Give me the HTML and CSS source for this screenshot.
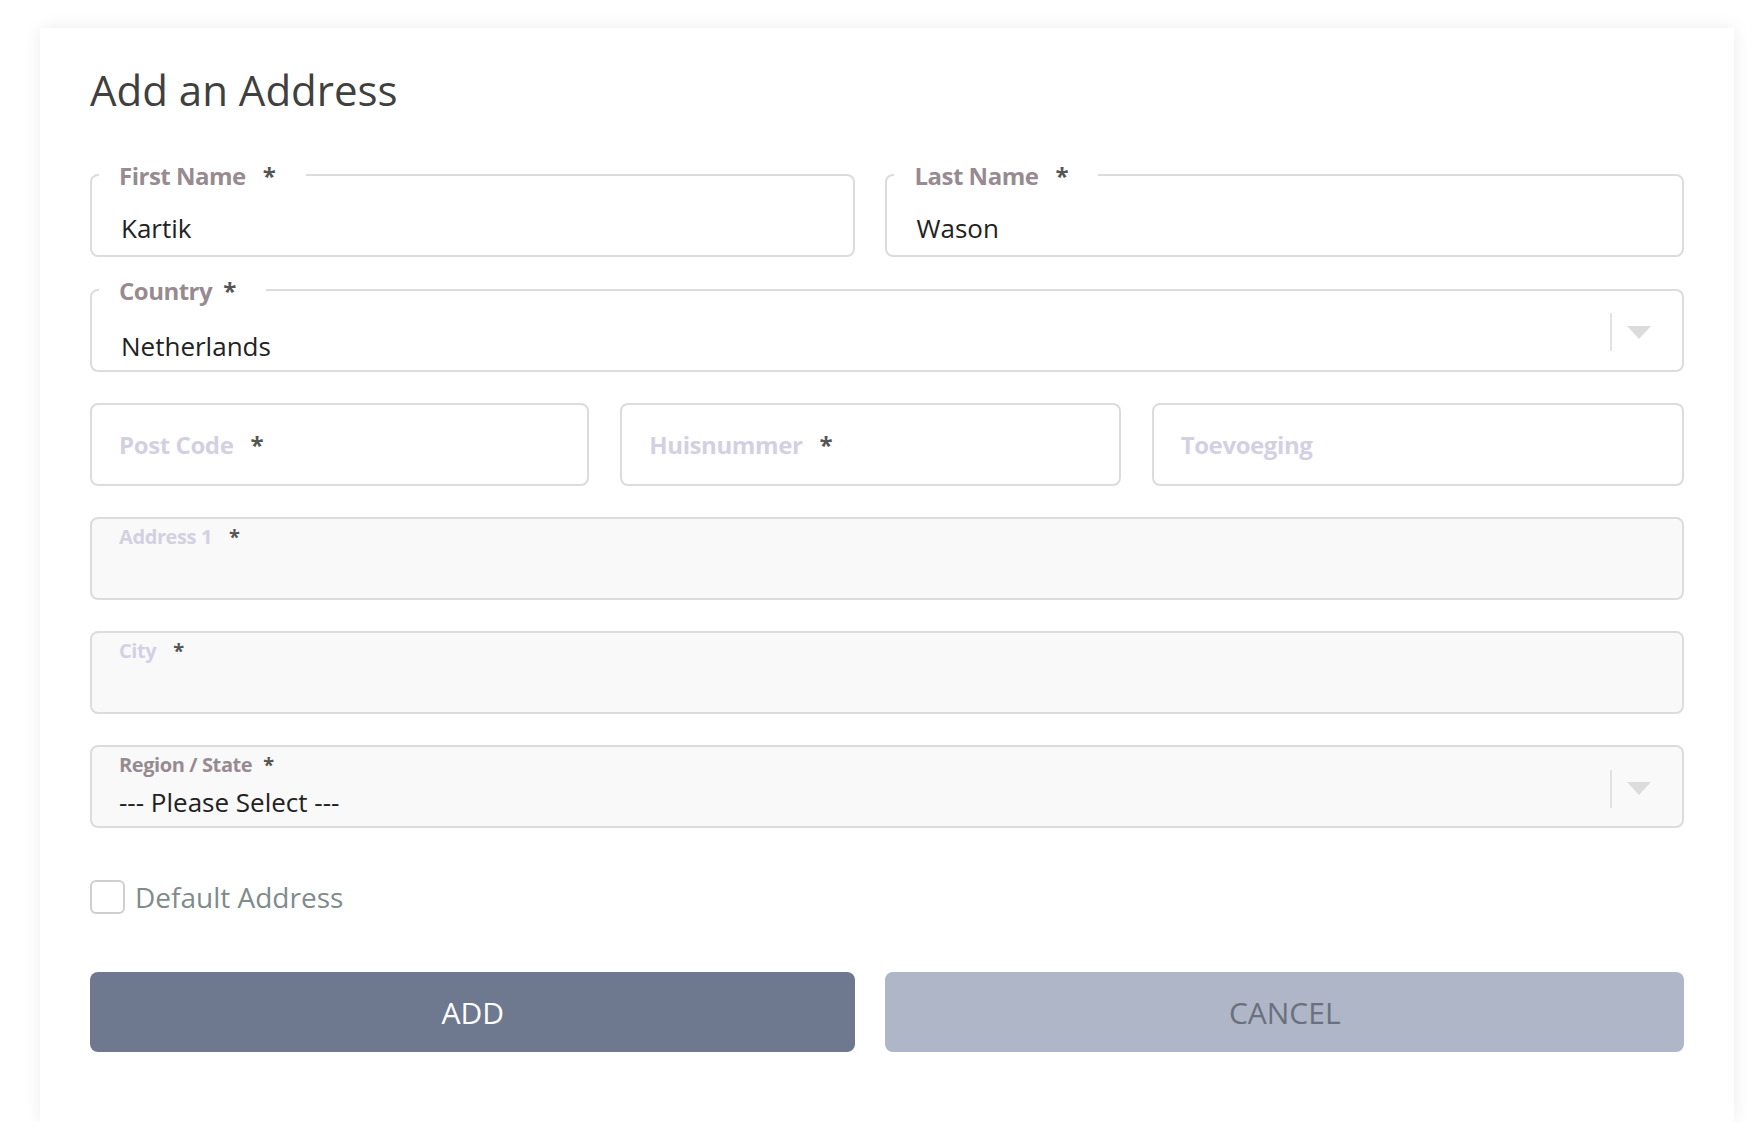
FILE: index.html
```html
<!DOCTYPE html>
<html lang="en">
<head>
<meta charset="utf-8">
<title>Add an Address</title>
<link rel="stylesheet" href="styles.css">
</head>
<body>
<div class="card">
  <h1 class="title">Add an Address</h1>
  <form class="form">
    <div class="row two first">
      <fieldset class="field">
        <legend class="legend">First Name<span class="req">*</span></legend>
        <div class="value">Kartik</div>
      </fieldset>
      <fieldset class="field">
        <legend class="legend">Last Name<span class="req">*</span></legend>
        <div class="value">Wason</div>
      </fieldset>
    </div>

    <fieldset class="field country">
      <legend class="legend">Country<span class="req tight">*</span></legend>
      <div class="select-row">
        <div class="value select-value">Netherlands</div>
        <span class="sep sep-country"></span>
        <span class="caret caret-country"></span>
      </div>
    </fieldset>

    <div class="row three gap-top">
      <div class="box plain"><span class="ph">Post Code</span><span class="req">*</span></div>
      <div class="box plain"><span class="ph">Huisnummer</span><span class="req">*</span></div>
      <div class="box plain"><span class="ph">Toevoeging</span></div>
    </div>

    <div class="box filled gap-top">
      <span class="small-label">Address 1<span class="req">*</span></span>
    </div>

    <div class="box filled gap-top">
      <span class="small-label">City<span class="req">*</span></span>
    </div>

    <div class="box filled region gap-top">
      <div class="stack">
        <span class="small-label mauve">Region / State<span class="req tight">*</span></span>
        <span class="region-value">--- Please Select ---</span>
      </div>
      <span class="sep sep-region"></span>
      <span class="caret caret-region"></span>
    </div>

    <label class="check"><span class="checkbox"></span>Default Address</label>

    <div class="row two buttons">
      <button type="button" class="btn add">ADD</button>
      <button type="button" class="btn cancel">CANCEL</button>
    </div>
  </form>
</div>
</body>
</html>
```

FILE: styles.css
```css
* { box-sizing: border-box; }

body {
  margin: 0;
  background: #ffffff;
  font-family: "Open Sans", "Noto Sans", sans-serif;
}

.card {
  margin: 28px 20px 0 40px;
  background: #ffffff;
  box-shadow: 0 0 16px rgba(0, 0, 0, 0.08);
  padding: 34px 50px 70px 50px;
}

.title {
  margin: 0;
  font-size: 42px;
  line-height: 56px;
  font-weight: 400;
  color: #404040;
}

.form { margin: 0; }

.row { display: grid; }
.row.two { grid-template-columns: 765fr 798fr; column-gap: 30px; }
.row.three { grid-template-columns: 499fr 500fr 532fr; column-gap: 31px; }
.first { margin-top: 41px; }
.gap-top { margin-top: 31px; }

.field {
  margin: 0;
  padding: 0;
  min-width: 0;
  border: 2px solid #dcdcdc;
  border-radius: 8px;
}

.legend {
  margin-left: 7px;
  padding: 2px 30px 0 20px;
  font-size: 24px;
  line-height: 30px;
  font-weight: 700;
  letter-spacing: -0.5px;
  color: #978b91;
}

.req {
  margin-left: 17px;
  color: #555555;
  font-weight: 700;
  letter-spacing: 0;
}
.req.tight { margin-left: 11px; }

.value {
  height: 64px;
  padding: 19px 29px 0;
  font-size: 26px;
  line-height: 36px;
  color: #222222;
}

.country { margin-top: 17px; }

.select-row {
  display: flex;
  align-items: flex-start;
  height: 64px;
}
.select-value { flex: 1; padding-top: 22px; height: 64px; }

.sep {
  flex: none;
  width: 2px;
  height: 38px;
  background: #e2e2e2;
}
.caret {
  flex: none;
  width: 0;
  height: 0;
  border-left: 12px solid transparent;
  border-right: 12px solid transparent;
  border-top: 13px solid #dcdcdc;
  margin-left: 15px;
  margin-right: 31px;
}
.sep-country { margin-top: 7px; }
.caret-country { margin-top: 20px; }

.box {
  height: 83px;
  border: 2px solid #dcdcdc;
  border-radius: 8px;
  background: #ffffff;
}
.box.plain {
  display: flex;
  align-items: center;
  padding-left: 27px;
}
.ph {
  font-size: 24px;
  font-weight: 700;
  letter-spacing: -0.4px;
  color: #d4d0e3;
}
.box.plain .req { font-size: 24px; }

.box.filled {
  background: #f9f9f9;
  padding: 4px 27px 0;
}
.small-label {
  display: block;
  font-size: 20px;
  line-height: 28px;
  font-weight: 700;
  letter-spacing: -0.4px;
  color: #d4d0e3;
}
.small-label.mauve { color: #978b91; }

.box.region {
  display: flex;
  align-items: flex-start;
  padding-right: 0;
}
.stack { flex: 1; }
.region-value {
  display: block;
  margin-top: 5px;
  font-size: 26px;
  line-height: 36px;
  color: #222222;
}
.sep-region { margin-top: 19px; }
.caret-region { margin-top: 31px; }

.check {
  display: flex;
  align-items: center;
  margin-top: 52px;
  font-size: 28px;
  line-height: 34px;
  color: #808b8c;
}
.checkbox {
  flex: none;
  width: 35px;
  height: 34px;
  border: 2px solid #cfcfcf;
  border-radius: 6px;
  margin-right: 10px;
  background: #ffffff;
}

.buttons { margin-top: 58px; }
.btn {
  height: 80px;
  border: none;
  border-radius: 8px;
  font-family: inherit;
  font-size: 30px;
  font-weight: 400;
  cursor: pointer;
}
.btn.add { background: #6e7990; color: #ffffff; }
.btn.cancel { background: #aeb6c8; color: #6b717c; }
```
